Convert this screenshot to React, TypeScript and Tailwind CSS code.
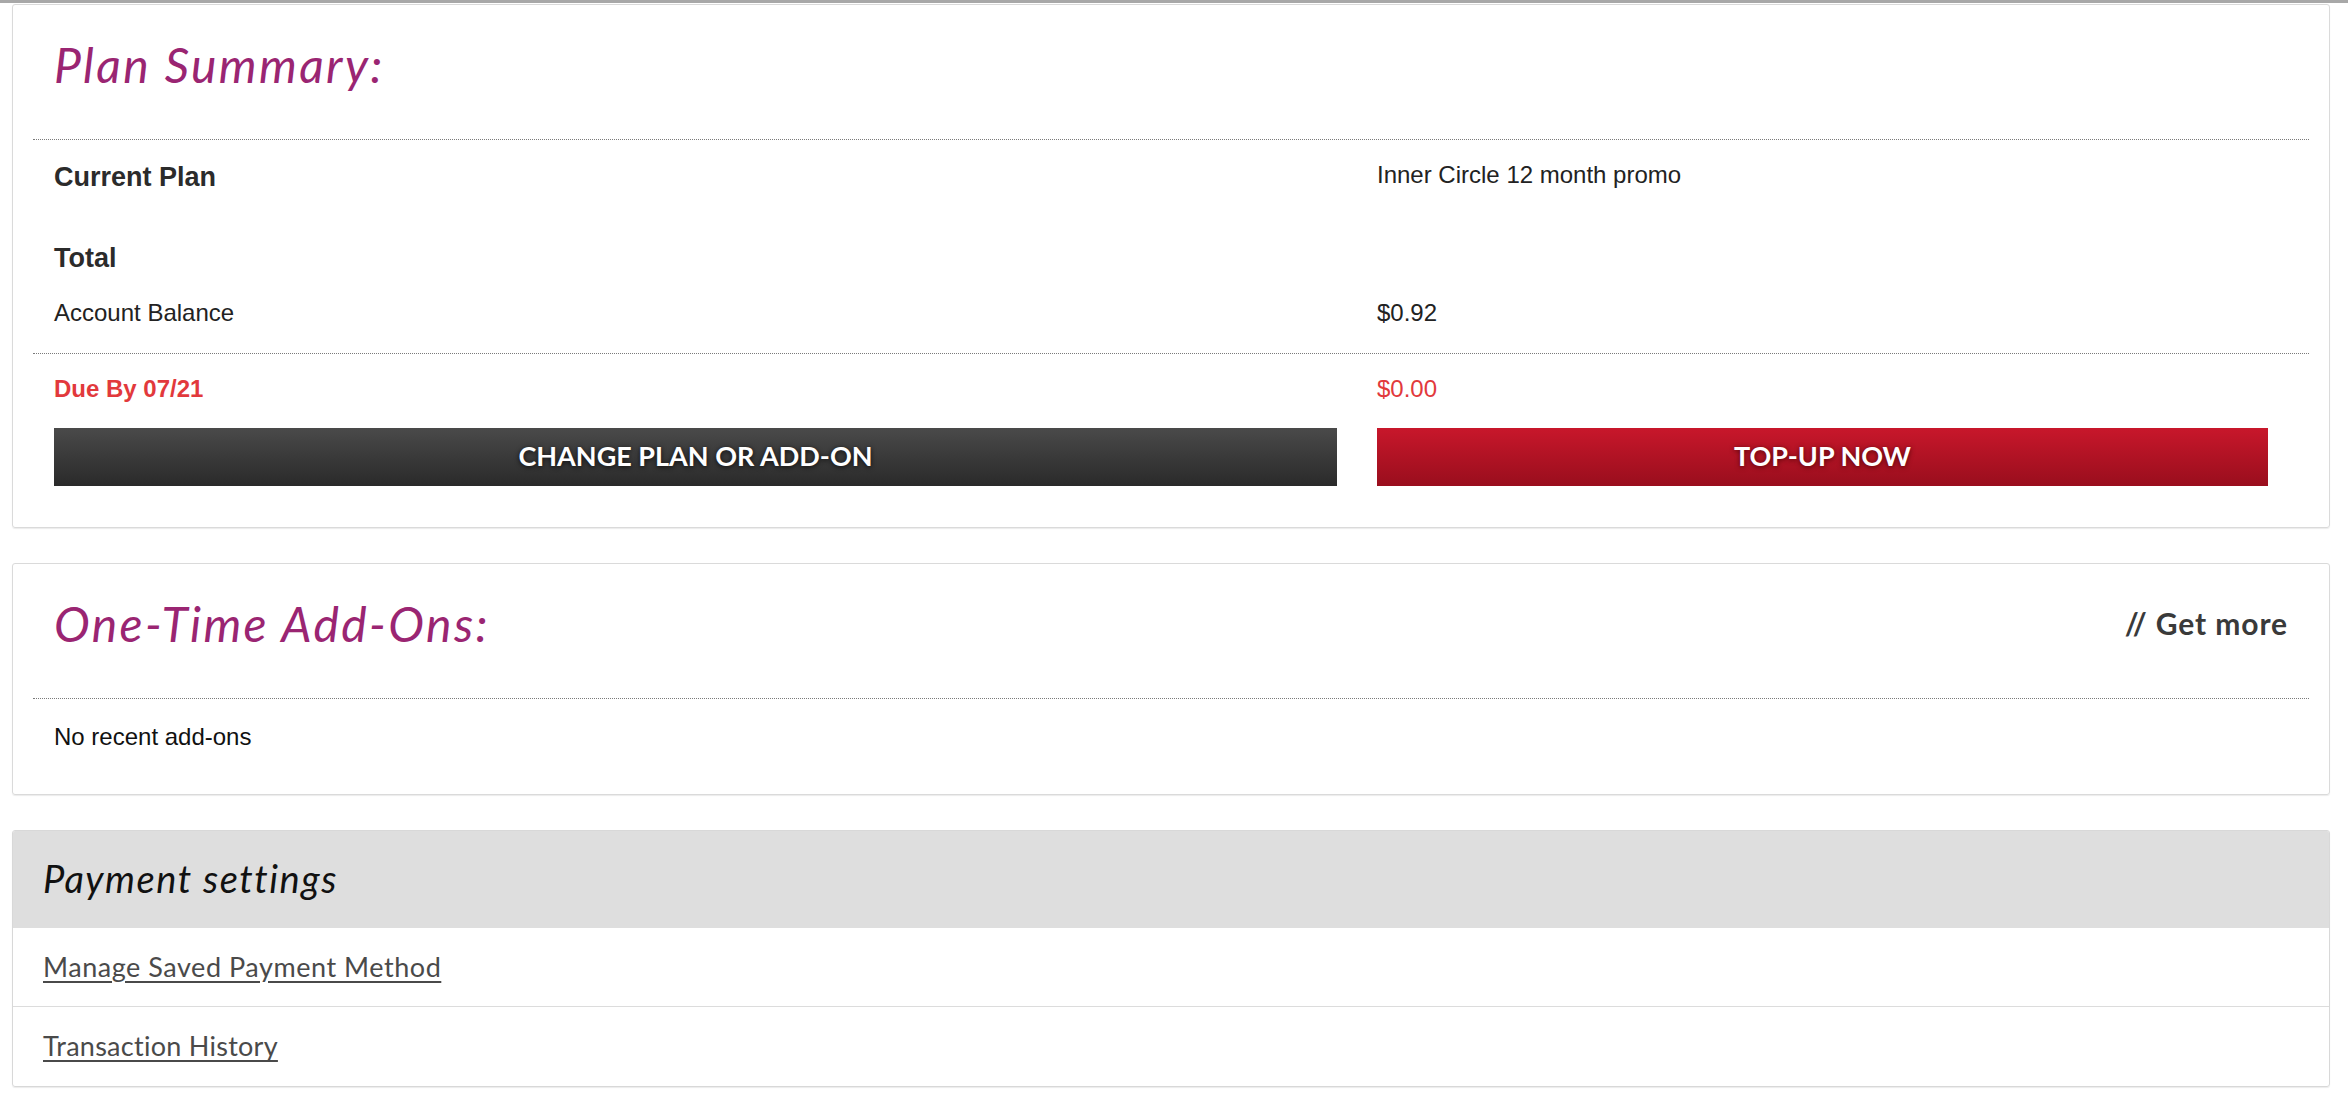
import React from 'react';

const sans = { fontFamily: '"Liberation Sans", Arial, sans-serif' };

const CardHeader: React.FC<{ title: string; right?: React.ReactNode }> = ({ title, right }) => (
  <div className="flex h-[135px] items-start justify-between border-b border-dotted border-[#7a7a7a] px-[21px] pt-[36px]">
    <h2 className="font-['Lato',sans-serif] text-[48px] leading-none font-normal italic tracking-[0.05em] text-[#9a2572]">
      {title}
    </h2>
    {right}
  </div>
);

const Row: React.FC<{ left: React.ReactNode; right?: React.ReactNode; className?: string }> = ({
  left,
  right,
  className = '',
}) => (
  <div className={`grid grid-cols-[1283px_1fr] items-center gap-x-[40px] px-[21px] ${className}`}>
    <div>{left}</div>
    <div>{right}</div>
  </div>
);

export default function App() {
  return (
    <div className="min-h-[1108px] border-t-[3px] border-[#a8a8a8] bg-white pt-px pr-[18px] pl-[12px]" style={sans}>
      {/* Plan summary */}
      <section className="rounded-[3px] border border-[#dadada] px-[20px] pb-[41px] shadow-[0_1px_1px_rgba(0,0,0,0.08)]">
        <CardHeader title="Plan Summary:" />
        <div className="border-b border-dotted border-[#7a7a7a] pb-[7px]">
          <Row
            className="h-[74px]"
            left={<span className="text-[27px] font-bold text-[#2b2b2b]">Current Plan</span>}
            right={<span className="relative -top-[2px] text-[24px] text-[#222]">Inner Circle 12 month promo</span>}
          />
          <Row className="mt-[22px] h-[44px]" left={<span className="text-[27px] font-bold text-[#2b2b2b]">Total</span>} />
          <Row
            className="h-[66px]"
            left={<span className="text-[24px] text-[#222]">Account Balance</span>}
            right={<span className="text-[24px] text-[#222]">$0.92</span>}
          />
        </div>
        <Row
          className="h-[70px]"
          left={<span className="text-[24px] font-bold text-[#e2393c]">Due By 07/21</span>}
          right={<span className="text-[24px] text-[#e2393c]">$0.00</span>}
        />
        <Row
          className="mt-[4px]"
          left={
            <button className="flex h-[58px] w-full items-center justify-center bg-gradient-to-b from-[#4a4a4a] to-[#2a2a2a] pb-[2px] font-['Lato',sans-serif] text-[27px] font-bold text-white [text-shadow:0_1px_5px_rgba(0,0,0,0.8)]">
              CHANGE PLAN OR ADD-ON
            </button>
          }
          right={
            <button className="flex h-[58px] w-[891px] items-center justify-center bg-gradient-to-b from-[#c8172b] to-[#990e1d] pb-[2px] font-['Lato',sans-serif] text-[27px] font-bold text-white [text-shadow:0_1px_5px_rgba(60,0,0,0.8)]">
              TOP-UP NOW
            </button>
          }
        />
      </section>

      {/* Add-ons */}
      <section className="mt-[35px] rounded-[3px] border border-[#dadada] px-[20px] pb-[23px] shadow-[0_1px_1px_rgba(0,0,0,0.08)]">
        <CardHeader
          title="One-Time Add-Ons:"
          right={
            <a className="mt-[8px] font-['Lato',sans-serif] text-[30px] leading-none font-bold tracking-[0.03em] text-[#3a3a3a]">
              // Get more
            </a>
          }
        />
        <div className="flex h-[72px] items-center px-[21px] pt-[3px]">
          <span className="text-[24px] text-[#111]">No recent add-ons</span>
        </div>
      </section>

      {/* Payment settings */}
      <section className="mt-[35px] overflow-hidden rounded-[3px] border border-[#d8d8d8] shadow-[0_1px_1px_rgba(0,0,0,0.08)]">
        <div className="flex h-[97px] items-center bg-[#dedede] px-[30px]">
          <h3 className="relative -top-px font-['Lato',sans-serif] text-[38px] font-normal italic tracking-[0.04em] text-[#111]">
            Payment settings
          </h3>
        </div>
        <div className="flex h-[79px] items-center border-b border-[#dcdcdc] px-[30px]">
          <a href="#" className="font-['Lato',sans-serif] text-[27px] tracking-[0.02em] text-[#4a4a4a] underline underline-offset-[4px]">
            Manage Saved Payment Method
          </a>
        </div>
        <div className="flex h-[79px] items-center px-[30px]">
          <a href="#" className="font-['Lato',sans-serif] text-[27px] tracking-[0.01em] text-[#4a4a4a] underline underline-offset-[4px]">
            Transaction History
          </a>
        </div>
      </section>
    </div>
  );
}
